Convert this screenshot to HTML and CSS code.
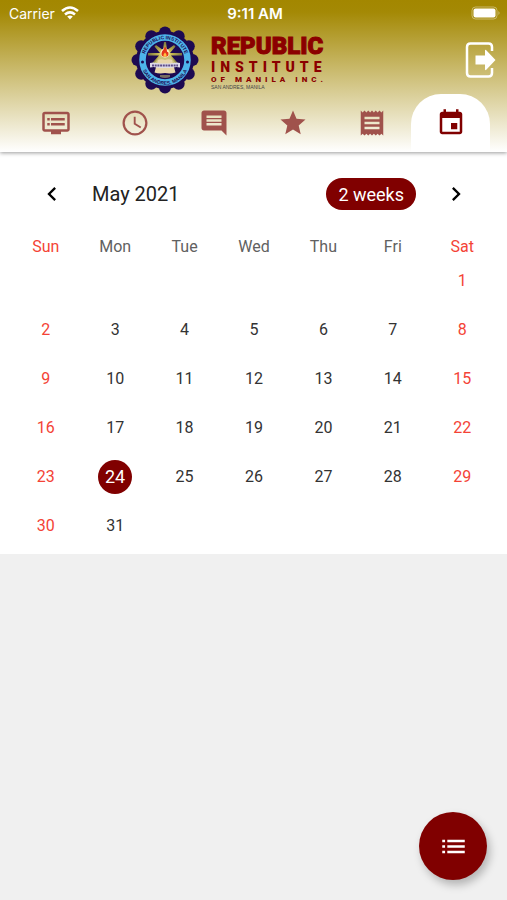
FILE: index.html
```html
<!DOCTYPE html>
<html lang="en">
<head>
    <meta charset="UTF-8">
    <meta name="viewport" content="width=device-width, initial-scale=1.0">
    <title>Republic Institute of Manila - Calendar</title>
    <link rel="stylesheet" href="styles.css">
</head>
<body>
    <header class="header">
        <div class="status-bar">
            <span class="carrier">Carrier
                <svg width="18" height="14" viewBox="0 0 18 14" fill="none" stroke="#fff" stroke-width="2.600">
                    <path d="M1 5Q9-2 17 5M4 8.400Q9 4.200 14 8.400"/>
                    <path d="M9 13.500L6.200 10.600Q9 8.200 11.800 10.600z" fill="#fff" stroke="none"/>
                </svg>
            </span>
            <span class="clock">9:11 AM</span>
            <span class="battery">
                <svg width="30" height="14" viewBox="0 0 30 14">
                    <rect x="1" y="1" width="25" height="12" rx="3.500" fill="none" stroke="#fff" stroke-opacity=".4"/>
                    <rect x="2.500" y="2.500" width="22" height="9" rx="2" fill="#fff"/>
                    <path d="M27.500 5v4q2-2 0-4z" fill="#fff" fill-opacity=".5"/>
                </svg>
            </span>
        </div>

        <div class="brand-row">
            <div class="brand">
                <svg class="seal" width="68" height="68" viewBox="0 0 68 68">
                    <defs>
                        <path id="arc-top" d="M13.200 34a20.800 20.800 0 0 1 41.600 0"/>
                        <path id="arc-bottom" d="M9.300 34a24.700 24.700 0 0 0 49.400 0"/>
                        <radialGradient id="glow">
                            <stop offset="0" stop-color="#fff6b8"/>
                            <stop offset=".4" stop-color="#c9b951"/>
                            <stop offset="1" stop-color="#77743f"/>
                        </radialGradient>
                    </defs>
                    <!-- scalloped rim -->
                    <g fill="#1d0a52">
                        <circle cx="34" cy="34" r="29"/>
                        <circle cx="34" cy="6.500" r="6"/><circle cx="47.700" cy="10.200" r="6"/>
                        <circle cx="57.800" cy="20.300" r="6"/><circle cx="61.500" cy="34" r="6"/>
                        <circle cx="57.800" cy="47.700" r="6"/><circle cx="47.700" cy="57.800" r="6"/>
                        <circle cx="34" cy="61.500" r="6"/><circle cx="20.300" cy="57.800" r="6"/>
                        <circle cx="10.200" cy="47.700" r="6"/><circle cx="6.500" cy="34" r="6"/>
                        <circle cx="10.200" cy="20.300" r="6"/><circle cx="20.300" cy="10.200" r="6"/>
                    </g>
                    <circle cx="34" cy="34" r="22.500" fill="#1d0a52" stroke="#4db4ea" stroke-width="6.500"/>
                    <g class="seal-text">
                        <text><textPath href="#arc-top" startOffset="50%">REPUBLIC INSTITUTE</textPath></text>
                        <text><textPath href="#arc-bottom" startOffset="50%">SAN ANDRES, MANILA</textPath></text>
                    </g>
                    <circle cx="11.500" cy="36" r="1.500" fill="#1d0a52"/>
                    <circle cx="56.500" cy="36" r="1.500" fill="#1d0a52"/>
                    <!-- rays -->
                    <path d="M33 16h2l1 8 7-5 1.500 1.500-5.500 6.500h12v2.500H40l9 10-2 2-13-9-13 9-2-2 9-10H17V27h12l-5.500-6.500L25 19l7 5z" fill="url(#glow)"/>
                    <path d="M34 24L21 40h26z" fill="#c9c07a"/>
                    <circle cx="34" cy="27" r="4.500" fill="#fff3c4"/>
                    <path d="M34 20.500q-1 3-3 5-1.500 3.500 1 5h4q2.500-1.500 1-5-1 1-1 0 0-3-2-5z" fill="#e5361c"/>
                    <path d="M34 26.500q-2.500 2.500-1 4h2q1.500-1.500-1-4z" fill="#ffc13d"/>
                    <!-- book with banner -->
                    <path d="M27 34q3.500-1.500 7 0 3.500-1.500 7 0l3.500 12.500q-5 1.500-10.500.5-5.500 1-10.500-.5z" fill="#e9d6aa"/>
                    <path d="M29 49h10v2q-5 2-10 0z" fill="#776d62"/>
                    <path d="M19 37q3.500-1 6.500 0 8.500 1 17 0 3-1 6.500 0v4.500q-3.500-1-6.500 0-8.500 1-17 0-3-1-6.500 0z" fill="#dedbe8"/>
                    <path d="M21 39.500h26" stroke="#5d4b88" stroke-width="2" stroke-dasharray="2 .7"/>
                </svg>
                <div class="brand-name">
                    <span class="brand-main">REPUBLIC</span>
                    <span class="brand-sub">INSTITUTE</span>
                    <span class="brand-city">OF MANILA INC.</span>
                    <span class="brand-place">SAN ANDRES, MANILA</span>
                </div>
            </div>
            <button class="logout" aria-label="Log out">
                <svg width="32" height="38" viewBox="0 0 32 38">
                    <path d="M27 10V6q0-3.500-3.500-3.500h-18Q2 2.500 2 6v26q0 3.500 3.500 3.500h18Q27 35.500 27 32v-5" fill="none" stroke="#fff" stroke-width="2.500"/>
                    <path d="M10.500 14.500H20V10q0-2 1.500-.5l9 9.500-9 9.500Q20 30 20 28v-4.500h-9.500z" fill="#fff"/>
                </svg>
            </button>
        </div>

        <nav class="tabs">
            <a href="#" class="tab" aria-label="Feed">
                <svg viewBox="0 0 24 24"><path d="M21 3H3c-1.100 0-2 .9-2 2v12c0 1.100.9 2 2 2h5v2h8v-2h5c1.100 0 1.990-.9 1.990-2L23 5c0-1.100-.9-2-2-2zm0 14H3V5h18v12zM19 8H8v2h11V8zm0 4H8v2h11v-2zM7 8H5v2h2V8zm0 4H5v2h2v-2z"/></svg>
            </a>
            <a href="#" class="tab" aria-label="Schedule">
                <svg viewBox="0 0 24 24"><path d="M12 2C6.500 2 2 6.500 2 12s4.500 10 10 10 10-4.500 10-10S17.500 2 12 2zm0 18.200a8.200 8.200 0 1 1 0-16.400 8.200 8.200 0 0 1 0 16.400zM12.500 7H11v6l5.200 3.200.8-1.300-4.500-2.700z"/></svg>
            </a>
            <a href="#" class="tab" aria-label="Messages">
                <svg viewBox="0 0 24 24"><path d="M21.990 4c0-1.100-.89-2-1.990-2H4c-1.100 0-2 .9-2 2v12c0 1.100.9 2 2 2h14l4 4-.01-18zM18 14H6v-2h12v2zm0-3H6V9h12v2zm0-3H6V6h12v2z"/></svg>
            </a>
            <a href="#" class="tab" aria-label="Grades">
                <svg viewBox="0 0 24 24"><path d="M12 17.270L18.180 21l-1.640-7.030L22 9.240l-7.190-.61L12 2 9.190 8.630 2 9.240l5.460 4.730L5.820 21z"/></svg>
            </a>
            <a href="#" class="tab" aria-label="Receipts">
                <svg viewBox="0 0 24 24"><path d="M18 17H6v-2h12v2zm0-4H6v-2h12v2zm0-4H6V7h12v2zM3 22l1.500-1.500L6 22l1.500-1.500L9 22l1.500-1.500L12 22l1.500-1.500L15 22l1.500-1.500L18 22l1.500-1.500L21 22V2l-1.500 1.500L18 2l-1.500 1.500L15 2l-1.500 1.500L12 2l-1.500 1.500L9 2 7.500 3.500 6 2 4.500 3.500 3 2v20z"/></svg>
            </a>
            <a href="#" class="tab active" aria-label="Calendar">
                <svg viewBox="0 0 24 24"><path d="M17 12h-5v5h5v-5zM16 1v2H8V1H6v2H5c-1.110 0-1.990.9-1.990 2L3 19c0 1.100.89 2 2 2h14c1.100 0 2-.9 2-2V5c0-1.100-.9-2-2-2h-1V1h-2zm3 18H5V8h14v11z"/></svg>
            </a>
        </nav>
    </header>

    <main class="calendar">
        <div class="calendar-header">
            <button class="arrow" aria-label="Previous month">
                <svg viewBox="0 0 24 24"><path d="M15.400 7.400L14 6l-6 6 6 6 1.400-1.400L10.800 12z"/></svg>
            </button>
            <h1>May 2021</h1>
            <button class="format-button">2 weeks</button>
            <button class="arrow" aria-label="Next month">
                <svg viewBox="0 0 24 24"><path d="M10 6L8.600 7.400l4.600 4.600-4.600 4.600L10 18l6-6z"/></svg>
            </button>
        </div>
        <table>
            <thead>
                <tr><th>Sun</th><th>Mon</th><th>Tue</th><th>Wed</th><th>Thu</th><th>Fri</th><th>Sat</th></tr>
            </thead>
            <tbody>
                <tr><td></td><td></td><td></td><td></td><td></td><td></td><td>1</td></tr>
                <tr><td>2</td><td>3</td><td>4</td><td>5</td><td>6</td><td>7</td><td>8</td></tr>
                <tr><td>9</td><td>10</td><td>11</td><td>12</td><td>13</td><td>14</td><td>15</td></tr>
                <tr><td>16</td><td>17</td><td>18</td><td>19</td><td>20</td><td>21</td><td>22</td></tr>
                <tr><td>23</td><td><span class="today">24</span></td><td>25</td><td>26</td><td>27</td><td>28</td><td>29</td></tr>
                <tr><td>30</td><td>31</td><td></td><td></td><td></td><td></td><td></td></tr>
            </tbody>
        </table>
    </main>

    <button class="fab" aria-label="Event list">
        <svg viewBox="0 0 24 24"><path d="M2 6h2.500v2.300H2zM6.500 6H22v2.300H6.500zM2 10.900h2.500v2.300H2zM6.500 10.900H22v2.300H6.500zM2 15.700h2.500V18H2zM6.500 15.700H22V18H6.500z"/></svg>
    </button>
</body>
</html>
```
FILE: styles.css
```css
* {
    box-sizing: border-box;
}
body {
    font-family: Roboto, sans-serif;
    background-color: #f0f0f0;
    margin: 0;
    min-height: 100vh;
}
button {
    font-family: inherit;
    border: none;
    padding: 0;
    background: none;
    cursor: pointer;
}
svg {
    display: block;
}

/* header */
.header {
    position: relative;
    background: linear-gradient(#a38700 0, #a48905 12px, #fff 100%);
    box-shadow: 0 1px 4px rgba(0, 0, 0, 0.4);
}
.status-bar {
    display: grid;
    grid-template-columns: 1fr auto 1fr;
    align-items: center;
    height: 26px;
    padding: 0 6px 0 9px;
    font-family: Inter, sans-serif;
    font-size: 14px;
    color: #fff;
}
.carrier {
    display: flex;
    align-items: center;
    gap: 6px;
}
.clock {
    font-size: 15px;
    font-weight: 600;
}
.battery {
    justify-self: end;
}
.brand-row {
    display: flex;
    align-items: center;
    height: 68px;
}
.brand {
    display: flex;
    align-items: center;
    gap: 12px;
    margin: 0 auto;
}
.seal-text {
    font-family: "Liberation Sans", sans-serif;
    font-size: 5px;
    font-weight: bold;
    text-anchor: middle;
    fill: #1d0a52;
}
.brand-name {
    display: flex;
    flex-direction: column;
    width: 114px;
    padding-top: 2px;
    font-weight: 900;
    color: #8b0000;
    white-space: nowrap;
}
.brand-main {
    font-size: 24px;
    line-height: 28px;
    -webkit-text-stroke: 1px #8b0000;
}
.brand-sub {
    font-size: 14px;
    line-height: 15px;
    letter-spacing: 5px;
}
.brand-city {
    font-size: 8px;
    line-height: 9px;
    letter-spacing: 4px;
}
.brand-place {
    font-family: "Liberation Sans", sans-serif;
    font-size: 5px;
    line-height: 6px;
    font-weight: normal;
    color: #444;
}
.logout {
    display: flex;
    justify-content: center;
    width: 51px;
    padding-right: 2px;
}

/* tabs */
.tabs {
    display: flex;
    padding: 0 17px;
}
.tab {
    flex: 1;
    display: flex;
    justify-content: center;
    align-items: center;
    height: 58px;
}
.tab svg {
    width: 30px;
    fill: #a0524c;
}
.tab.active {
    background-color: #fff;
    border-radius: 30px 30px 0 0;
}
.tab.active svg {
    fill: #800000;
}

/* calendar */
.calendar {
    padding: 26px 10px 4px 11px;
    background-color: #fff;
}
.calendar-header {
    display: flex;
    align-items: center;
    gap: 20px;
    padding: 0 21px;
}
.calendar-header h1 {
    flex: 1;
    margin: 0;
    font-size: 20px;
    font-weight: normal;
    color: #222;
}
.arrow {
    display: flex;
    justify-content: center;
    width: 40px;
}
.arrow svg {
    width: 28px;
}
.format-button {
    height: 32px;
    padding: 0 12px;
    border-radius: 16px;
    font-size: 18px;
    color: #fff;
    background-color: #800000;
}
table {
    width: 100%;
    margin-top: 26px;
    table-layout: fixed;
    border-collapse: collapse;
    font-size: 16px;
    text-align: center;
}
th {
    height: 20px;
    padding: 0;
    font-weight: normal;
    color: #616161;
}
td {
    height: 49px;
    padding: 0;
    color: #333;
}
th:first-child, th:last-child,
td:first-child, td:last-child {
    color: #f44336;
}
.today {
    display: flex;
    justify-content: center;
    align-items: center;
    width: 34px;
    height: 34px;
    margin: 0 auto;
    border-radius: 50%;
    font-size: 18px;
    color: #fff;
    background-color: #800000;
}

/* floating button */
.fab {
    position: fixed;
    right: 20px;
    bottom: 20px;
    display: flex;
    justify-content: center;
    align-items: center;
    width: 68px;
    height: 68px;
    border-radius: 50%;
    background-color: #800000;
    box-shadow: 3px 5px 8px rgba(0, 0, 0, 0.25);
}
.fab svg {
    width: 27px;
    fill: #fff;
}
```
